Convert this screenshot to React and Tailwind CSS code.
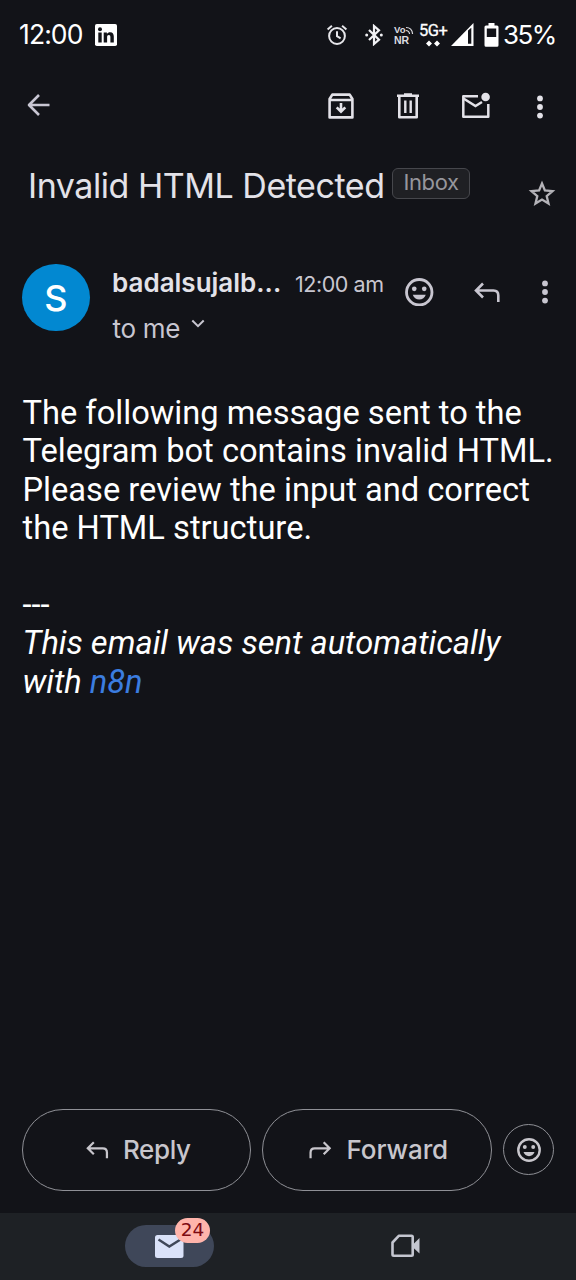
import React from "react";

const Svg = ({ w, h, className = "", children }) => (
  <svg width={w} height={h} viewBox={`0 0 ${w} ${h}`} className={`block shrink-0 ${className}`} fill="none">
    {children}
  </svg>
);

const Dots = ({ className = "" }) => (
  <Svg w={8} h={24} className={className}>
    <circle cx="4" cy="3.4" r="2.900" fill="currentColor" />
    <circle cx="4" cy="12" r="2.900" fill="currentColor" />
    <circle cx="4" cy="20.6" r="2.900" fill="currentColor" />
  </Svg>
);

const Smile = ({ size, className = "" }) => (
  <svg width={size} height={size} viewBox="0 0 28 28" fill="none" className={`block shrink-0 ${className}`}>
    <circle cx="14" cy="14" r="12.5" stroke="currentColor" strokeWidth="2.800" />
    <circle cx="9.1" cy="10.6" r="2.3" fill="currentColor" />
    <circle cx="18.9" cy="10.6" r="2.3" fill="currentColor" />
    <path d="M7.600 16.400h12.800c-1 3-3.300 4.800-6.400 4.800s-5.400-1.800-6.400-4.800z" fill="currentColor" />
  </svg>
);

const ReplyArrow = ({ w, h, className = "" }) => (
  <svg width={w} height={h} viewBox="0 0 26 21" fill="none" className={`block shrink-0 ${className}`}>
    <path d="M9 1.500L2 8.500l7 7M2.500 8.500H19.500Q24.300 8.500 24.300 13.500V20" stroke="currentColor" strokeWidth="2.600" />
  </svg>
);

function StatusBar() {
  return (
    <div className="flex h-[70px] shrink-0 items-center pl-[19px] text-white">
      <span className="w-[76px] whitespace-nowrap font-['Inter'] text-[26.500px] tracking-[-0.9px]">12:00</span>
      <Svg w={22} h={22}>
        <rect width="22" height="22" rx="1.800" fill="white" />
        <g fill="#121318">
          <circle cx="5" cy="5.200" r="2" />
          <path d="M3.300 8.500h3.400v10H3.300zM8.700 8.500h3.200v1.400c.7-1.100 1.800-1.700 3.200-1.700 2.800 0 3.700 1.900 3.700 4.400v5.900h-3.400v-5.300c0-1.500-.4-2.300-1.500-2.300-1.300 0-1.800.9-1.800 2.300v5.300H8.700z" />
        </g>
      </Svg>
      <Svg w={22} h={22} className="ml-[209px] -mt-px">
        <circle cx="11" cy="12" r="7.900" stroke="#e6e6ea" strokeWidth="2" />
        <path d="M11 7.200v5l3.600 2.200M1.600 5.400l4.300-3.700M20.400 5.400l-4.300-3.700" stroke="#e6e6ea" strokeWidth="2" />
      </Svg>
      <Svg w={18} h={22} className="ml-[17px] -mt-px">
        <path d="M4 6l10 9.700-5 4.300V2l5 4.300L4 16" stroke="#f1f1f4" strokeWidth="2.200" />
        <circle cx="1.700" cy="11" r="1.500" fill="#f1f1f4" />
        <circle cx="16.300" cy="11" r="1.500" fill="#f1f1f4" />
      </Svg>
      <div className="ml-[11px] flex w-[25px] flex-col text-[#dcdce0]">
        <div className="flex h-[10px] items-center">
          <span className="font-['Liberation_Sans'] text-[9.500px] font-bold leading-none">Vo</span>
          <Svg w={9} h={9}>
            <path d="M1 1.500Q7 1.500 7.600 8M.8 4.500Q4 4.500 4.600 8" stroke="currentColor" strokeWidth="1.200" />
          </Svg>
        </div>
        <span className="h-[10px] font-['Liberation_Sans'] text-[10.500px] font-bold leading-[10px]">NR</span>
      </div>
      <div className="flex w-[32px] flex-col items-start">
        <span className="h-[14px] font-['Roboto'] text-[16.500px] leading-[14px] tracking-[-0.5px] [-webkit-text-stroke:0.3px]">5G+</span>
        <Svg w={16} h={7} className="ml-[6px] mt-[2px]">
          <path d="M4 .5L7 3.500l-3 3-3-3zM12 .5l3 3-3 3-3-3z" fill="white" />
        </Svg>
      </div>
      <Svg w={23} h={23} className="-mt-px">
        <path d="M22.500 0V23H0z" fill="white" />
        <path d="M17 7.500l3.300-2.800v16H17z" fill="#121318" />
      </Svg>
      <Svg w={15} h={24} className="ml-[10px] -mt-px">
        <path d="M4.500 0h6v2.500H13q1.500 0 1.500 1.500v18.300q0 1.500-1.500 1.500H2Q.5 23.800.5 22.300V4Q.5 2.500 2 2.500h2.500z" fill="white" />
        <path d="M2.800 5.500h9.400V14H2.800z" fill="#121318" />
      </Svg>
      <span className="-mt-[2px] ml-[4px] whitespace-nowrap font-['Inter'] text-[26px] tracking-[-1.600px]">35%</span>
    </div>
  );
}

function Toolbar() {
  return (
    <div className="flex h-[70px] shrink-0 items-center pl-[27px] text-[#e3e2e8]">
      <Svg w={24} h={24} className="text-[#c8c6d2]">
        <path d="M12 2L2 12l10 10M2 12h20.500" stroke="currentColor" strokeWidth="2.600" strokeLinejoin="round" />
      </Svg>
      <Svg w={26} h={26} className="ml-[277px] mt-[2px]">
        <path d="M1.600 6L4.300 1.600H21.700L24.400 6V24.400H1.600zM2 7H24" stroke="currentColor" strokeWidth="2.600" strokeLinejoin="round" />
        <path d="M13 10v9M8.700 14.300L13 18.600l4.300-4.300" stroke="currentColor" strokeWidth="2.600" />
      </Svg>
      <Svg w={24} h={26} className="ml-[42px] mt-[2px]">
        <path d="M1 2.800H23M8 1.500H16M3.300 3V24.300H20.700V3" stroke="currentColor" strokeWidth="2.600" strokeLinejoin="round" />
        <path d="M9.300 7.500V20M14.700 7.500V20" stroke="currentColor" strokeWidth="2.400" />
      </Svg>
      <Svg w={30} h={27} className="ml-[41px]">
        <path d="M17 4.200H2.300V24.700H27.300V12" stroke="currentColor" strokeWidth="2.500" strokeLinejoin="round" />
        <path d="M2.500 6.500L14.500 14l6.500-4" stroke="currentColor" strokeWidth="2.500" />
        <circle cx="24.600" cy="5" r="4.300" fill="currentColor" />
      </Svg>
      <Dots className="ml-[45px] mt-[3px]" />
    </div>
  );
}

function Subject() {
  return (
    <div className="flex h-[124px] shrink-0 items-start pl-[28px]">
      <h1 className="mt-[25px] w-[364px] whitespace-nowrap font-['Inter'] text-[34px] font-normal leading-[42px] tracking-[-0.46px] text-[#e3e2e8]">
        Invalid HTML Detected
      </h1>
      <span className="mt-[28px] flex h-[31px] w-[78px] items-center justify-center rounded-[6px] border border-[#46474c] bg-[#1f2024] pb-[3px] font-['Inter'] text-[22px] leading-none tracking-[-0.4px] text-[#96969c]">
        Inbox
      </span>
      <Svg w={28} h={27} className="ml-[58px] mt-[40px] text-[#b4b3b8]">
        <path d="M14 3.500l2.900 7 7.600.6-5.800 5 1.800 7.400L14 19.500l-6.500 4 1.800-7.400-5.800-5 7.600-.6z" stroke="currentColor" strokeWidth="2.300" />
      </Svg>
    </div>
  );
}

function Sender() {
  return (
    <div className="flex h-[130px] shrink-0 items-start pl-[22px] text-[#c8c6d0]">
      <div className="flex h-[67px] w-[68px] items-center justify-center rounded-full bg-[#0288d1] font-['Inter'] text-[36px] font-medium leading-none text-white">
        S
      </div>
      <div className="ml-[22px] w-[293px]">
        <div className="flex h-[40px] items-center">
          <span className="-mt-[4px] w-[183px] whitespace-nowrap font-['Inter'] text-[26px] font-semibold tracking-[0px] text-[#e3e2e8]">badalsujalb...</span>
          <span className="whitespace-nowrap font-['Inter'] text-[21.500px] tracking-[-0.45px]">12:00 am</span>
        </div>
        <div className="mt-[4px] flex h-[40px] items-center">
          <span className="w-[82px] whitespace-nowrap pl-[0.500px] pt-px font-['Inter'] text-[26px] tracking-[-0.3px]">to me</span>
          <Svg w={14} h={9} className="mb-[9px] -ml-[3px]">
            <path d="M1.300 1.500L7 7.200l5.700-5.700" stroke="currentColor" strokeWidth="2" />
          </Svg>
        </div>
      </div>
      <Smile size={28.5} className="mt-[13.500px]" />
      <ReplyArrow w={26} h={21} className="ml-[40px] mt-[18px]" />
      <Dots className="ml-[41.500px] mt-[16px]" />
    </div>
  );
}

function Body() {
  return (
    <div className="flex-1 pl-[22.500px] font-['Roboto'] text-[32.650px] leading-[38.400px] text-white">
      <p className="whitespace-nowrap">
        The following message sent to the
        <br />
        Telegram bot contains invalid HTML.
        <br />
        Please review the input and correct
        <br />
        the HTML structure.
      </p>
      <p className="mt-[38.400px]">---</p>
      <p className="italic">
        This email was sent automatically
        <br />
        with <a className="text-[#3b7de0]">n8n</a>
      </p>
    </div>
  );
}

function Actions() {
  return (
    <div className="mb-[22.500px] flex shrink-0 items-center pl-[22px] font-['Inter'] text-[26px] font-medium leading-none text-[#c8c6cc]">
      <button className="flex h-[82px] w-[229px] items-center rounded-[41px] border-[1.500px] border-[#8f9096] pl-[63px]">
        <ReplyArrow w={22.5} h={18} />
        <span className="ml-[14.500px] tracking-[-0.4px]">Reply</span>
      </button>
      <button className="ml-[11px] flex h-[82px] w-[230px] items-center rounded-[41px] border-[1.500px] border-[#8f9096] pl-[45.500px]">
        <ReplyArrow w={22.5} h={18} className="-scale-x-100" />
        <span className="ml-[15.500px] tracking-[-0.1px]">Forward</span>
      </button>
      <button className="ml-[11px] flex h-[51px] w-[51px] items-center justify-center rounded-full border-[1.500px] border-[#8f9096]">
        <Smile size={24} />
      </button>
    </div>
  );
}

function BottomNav() {
  return (
    <div className="flex h-[67px] shrink-0 items-start bg-[#1e2125] pl-[125px]">
      <div className="relative mt-[12px] flex h-[42px] w-[89px] items-center justify-center rounded-full bg-[#3f4759]">
        <Svg w={29} h={23}>
          <rect width="28.500" height="23" rx="2.500" fill="#dae2f9" />
          <path d="M3.500 4.500L14.300 11.500L25.500 4.500" stroke="#3f4759" strokeWidth="2.400" />
        </Svg>
        <span className="absolute left-[50px] top-[-7px] flex h-[25px] w-[35px] items-center justify-center rounded-full bg-[#ffb4ab] font-['DejaVu_Sans'] text-[18.500px] leading-none text-[#7d0a12]">
          24
        </span>
      </div>
      <Svg w={30} h={24} className="ml-[177px] mt-[21px] text-[#c4c6d0]">
        <path d="M8 1.700H20.500Q21.700 1.700 21.700 3V20.500Q21.700 21.700 20.500 21.700H2.800Q1.500 21.700 1.500 20.500V8.500z" stroke="currentColor" strokeWidth="2.600" strokeLinejoin="round" />
        <path d="M21.500 11L28.500 4V19.500L21.500 13z" fill="currentColor" />
      </Svg>
    </div>
  );
}

export default function App() {
  return (
    <main className="flex h-[1280px] w-[576px] flex-col overflow-hidden bg-[#121318] font-['Roboto',sans-serif]">
      <StatusBar />
      <Toolbar />
      <Subject />
      <Sender />
      <Body />
      <Actions />
      <BottomNav />
    </main>
  );
}
